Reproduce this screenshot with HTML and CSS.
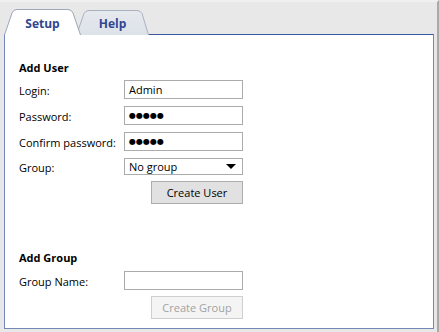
FILE: index.html
```html
<!DOCTYPE html>
<html>
<head>
<meta charset="utf-8">
<link rel="stylesheet" href="styles.css">
</head>
<body>
<div class="window">
  <div class="tabs">
    <div class="tab tab-active">
      <svg class="tab-bg" width="77" height="27" viewBox="0 0 77 27"><path d="M0.5,27 L8,5 Q9.5,1.5 13,1.5 L64,1.5 Q67.5,1.5 69,5 L76.5,27" fill="#ffffff" stroke="#9ba6b9" stroke-width="1"/></svg>
      <span class="tab-label">Setup</span>
    </div>
    <div class="tab tab-inactive">
      <svg class="tab-bg" width="73" height="26" viewBox="0 0 73 26"><defs><linearGradient id="hg" x1="0" y1="0" x2="0" y2="1"><stop offset="0" stop-color="#e6e9ee"/><stop offset="1" stop-color="#dde2e9"/></linearGradient></defs><path d="M0.5,26 L8,4.5 Q9.5,1.5 13,1.5 L61,1.5 Q64.5,1.5 66,4.5 L72.5,26" fill="url(#hg)" stroke="#a9b1bf" stroke-width="1"/></svg>
      <span class="tab-label">Help</span>
    </div>
  </div>
  <div class="panel">
    <div class="heading">Add User</div>
    <div class="form">
      <div class="label">Login:</div>
      <div class="field">Admin</div>
      <div class="label">Password:</div>
      <div class="field"><span class="dots">●●●●●</span></div>
      <div class="label">Confirm password:</div>
      <div class="field"><span class="dots">●●●●●</span></div>
      <div class="label label-group">Group:</div>
      <div class="field select">No group<span class="arrow"></span></div>
    </div>
    <div class="button-row"><div class="button">Create User</div></div>
    <div class="heading heading-group">Add Group</div>
    <div class="form form-group">
      <div class="label">Group Name:</div>
      <div class="field"></div>
    </div>
    <div class="button-row"><div class="button button-disabled">Create Group</div></div>
  </div>
</div>
</body>
</html>
```

FILE: styles.css
```css
html, body {
  margin: 0;
  padding: 0;
}
body {
  width: 439px;
  height: 332px;
  background: #e8e8e8;
  font-family: "Open Sans", "Noto Sans", sans-serif;
  font-size: 11px;
  color: #000;
  overflow: hidden;
}
.window {
  box-sizing: border-box;
  width: 439px;
  height: 332px;
  padding: 6px 0 0 4px;
  border-top: 2px solid #f0f0f0;
  border-right: 2px solid #a9a9a9;
}
.tabs {
  display: flex;
  height: 26px;
  position: relative;
  z-index: 2;
}
.tab {
  position: relative;
  height: 26px;
  display: flex;
  justify-content: center;
  align-items: center;
  padding-top: 4px;
  box-sizing: border-box;
}
.tab-bg {
  position: absolute;
  left: 0;
  top: 0;
}
.tab-active {
  width: 77px;
  z-index: 2;
}
.tab-inactive {
  width: 73px;
  margin-left: -5px;
  z-index: 1;
}
.tab-inactive .tab-bg {
  top: 1px;
}
.tab-label {
  position: relative;
  font-weight: 700;
  font-size: 12px;
  color: #2f4690;
}
.tab-inactive .tab-label {
  padding-top: 1px;
}
.panel {
  box-sizing: border-box;
  width: 430px;
  height: 295px;
  background: #fff;
  border: 1px solid #7488b8;
  border-top-color: #3a58a0;
  padding: 25px 0 0 14px;
  position: relative;
  z-index: 1;
}
.heading {
  font-weight: 700;
  line-height: 15px;
  height: 15px;
}
.heading-group {
  margin-top: 46px;
}
.form {
  display: grid;
  grid-template-columns: 105px 119px;
  grid-template-rows: 19px 19px 19px 17px;
  row-gap: 7px;
  margin-top: 5px;
}
.form-group {
  grid-template-rows: 19px;
  margin-top: 6px;
}
.label {
  display: flex;
  align-items: center;
  line-height: 15px;
  padding-top: 1px;
}
.field {
  box-sizing: border-box;
  border: 1px solid #ababab;
  background: #fff;
  display: flex;
  align-items: center;
  padding-left: 4px;
  line-height: 15px;
}
.dots {
  font-size: 8px;
  font-family: "DejaVu Sans", sans-serif;
}
.select {
  position: relative;
  justify-content: space-between;
  padding-right: 6px;
}
.arrow {
  width: 0;
  height: 0;
  border-left: 5px solid transparent;
  border-right: 5px solid transparent;
  border-top: 5px solid #000;
}
.button-row {
  padding-left: 132px;
  margin-top: 6px;
}
.button {
  box-sizing: border-box;
  width: 92px;
  height: 23px;
  border: 1px solid #adadad;
  background: #e1e1e1;
  display: flex;
  align-items: center;
  justify-content: center;
}
.button-disabled {
  border-color: #cfcfcf;
  background: #f4f4f4;
  color: #a2a2a2;
}
```
